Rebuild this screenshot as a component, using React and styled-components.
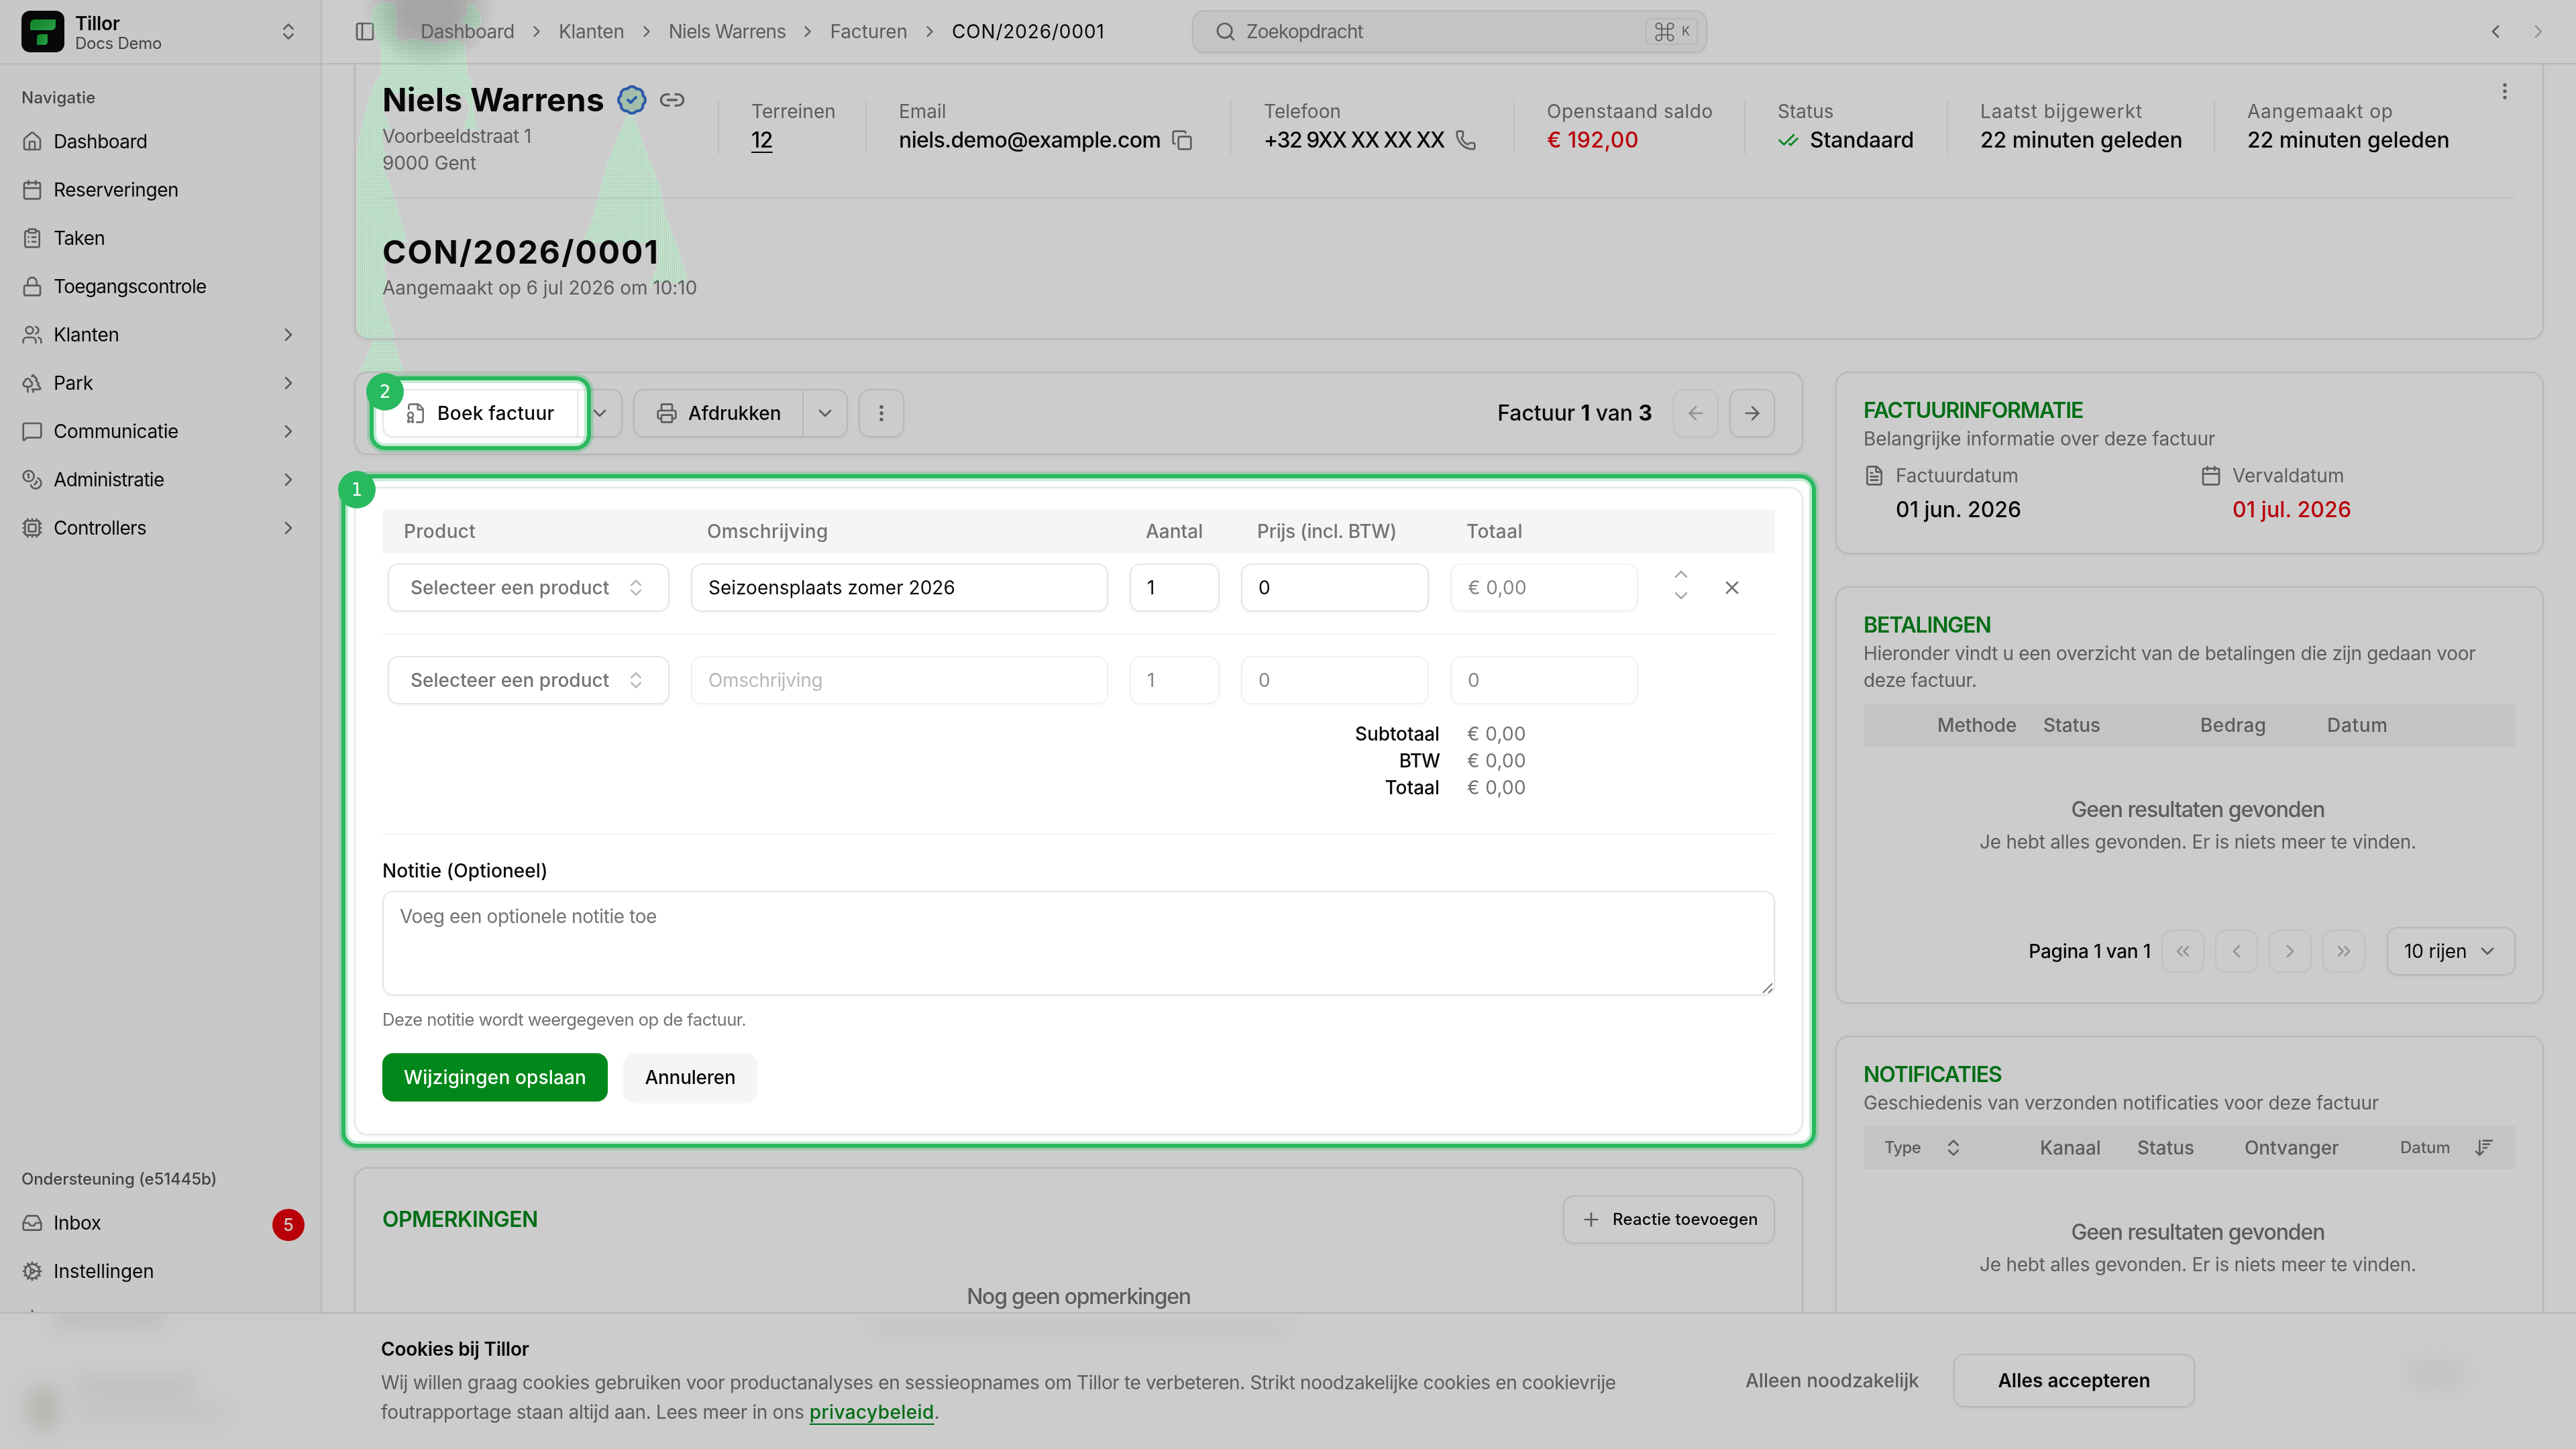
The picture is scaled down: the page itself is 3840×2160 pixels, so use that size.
import React from "react";
import styled, { createGlobalStyle, css } from "styled-components";
import {
  ArrowDownWideNarrow,
  ArrowLeft,
  ArrowRight,
  BadgeCheck,
  Calendar,
  CheckCheck,
  ChevronDown,
  ChevronLeft,
  ChevronRight,
  ChevronUp,
  ChevronsLeft,
  ChevronsRight,
  ChevronsUpDown,
  ClipboardList,
  Cog,
  Coins,
  Command,
  Copy,
  Cpu,
  EllipsisVertical,
  FileBadge,
  FileText,
  House,
  Inbox,
  Link2,
  Lock,
  MessageSquare,
  PanelLeft,
  Phone,
  Plus,
  Printer,
  Search,
  Sun,
  Trees,
  Users,
  X,
} from "lucide-react";

const color = {
  text: "#0a0a0a",
  label: "#545454",
  muted: "#737373",
  border: "#e5e5e5",
  soft: "#f5f5f5",
  sidebar: "#fafafa",
  green: "#00881a",
  red: "#e7000b",
  ring: "#29b95f",
};

const GlobalStyle = createGlobalStyle`
  * { box-sizing: border-box; }
  body {
    margin: 0;
    background: #fff;
    color: ${color.text};
    font-family: Inter, "Liberation Sans", sans-serif;
    font-size: 28px;
    line-height: 40px;
    overflow: hidden;
  }
  svg { display: block; flex: none; }
`;

/**
 * Text
 */
const Text = styled.span`
  display: block;
  white-space: nowrap;
  font-size: ${(p) => p.$size || 28}px;
  font-weight: ${(p) => p.$weight || 400};
  line-height: ${(p) => p.$line || 40}px;
  letter-spacing: ${(p) => p.$ls || 0}px;
  color: ${(p) => color[p.$tone] || color.text};
`;

/**
 * Shell
 */
const Page = styled.div`
  position: relative;
  display: flex;
  width: 3840px;
  height: 2160px;
  overflow: hidden;
`;

const Sidebar = styled.aside`
  display: flex;
  flex-direction: column;
  flex: none;
  width: 480px;
  height: 2160px;
  background: ${color.sidebar};
  border-right: 2px solid ${color.border};
`;

const Brand = styled.div`
  display: flex;
  align-items: center;
  gap: 16px;
  flex: none;
  height: 96px;
  padding: 0 32px;
  border-bottom: 2px solid ${color.border};

  > svg:last-child { margin-left: auto; color: ${color.muted}; }
`;

const BrandNames = styled.div`
  padding-top: 5px;
`;

const NavLabel = styled.div`
  padding: 0 32px;
  margin-top: ${(p) => p.$top}px;
  height: 40px;
`;

const NavList = styled.nav`
  margin-top: ${(p) => p.$top}px;
`;

const NavItem = styled.div`
  display: flex;
  align-items: center;
  gap: 16px;
  height: 72px;
  padding: 0 32px;

  > svg { color: ${color.muted}; }
  > svg:last-child:not(:first-child) { margin-left: auto; }
`;

const InboxCount = styled.span`
  display: flex;
  align-items: center;
  justify-content: center;
  width: 48px;
  height: 48px;
  margin: 6px -8px 0 auto;
  border-radius: 50%;
  background: ${color.red};
  color: #fff;
  font-size: 25px;
  font-weight: 500;
`;

const Main = styled.main`
  flex: 1;
  min-width: 0;
`;

/**
 * Top bar
 */
const TopBar = styled.header`
  position: relative;
  display: flex;
  align-items: center;
  height: 96px;
  padding: 0 40px 0 48px;
  border-bottom: 2px solid ${color.border};
  color: ${color.muted};
`;

const AvatarHaze = styled.div`
  position: absolute;
  left: 60px;
  top: -70px;
  width: 200px;
  height: 170px;
  background: radial-gradient(closest-side, #cfcfcf 0 35%, #dcdcdc 60%, rgba(255, 255, 255, 0) 100%);
`;

const TopRule = styled.div`
  width: 2px;
  height: 32px;
  margin: 0 33px 0 32px;
  background: ${color.border};
`;

const Crumbs = styled.div`
  position: relative;
  display: flex;
  align-items: center;
  gap: 19px;
  width: 1150px;
`;

const SearchBox = styled.div`
  display: flex;
  align-items: center;
  gap: 15px;
  width: 768px;
  height: 64px;
  padding: 0 12px 0 32px;
  border: 2px solid ${color.border};
  border-radius: 18px;
  background: ${color.soft};
  box-shadow: 0 2px 4px rgba(0, 0, 0, 0.05);
`;

const Kbd = styled.span`
  display: flex;
  align-items: center;
  gap: 8px;
  width: 78px;
  height: 40px;
  margin-left: auto;
  padding-left: 9px;
  border: 2px solid ${color.border};
  border-radius: 8px;
  font-size: 18px;
`;

const TopArrows = styled.div`
  display: flex;
  gap: 32px;
  margin-left: auto;

  > svg:last-child { opacity: 0.5; }
`;

/**
 * Cards
 */
const card = css`
  background: #fff;
  border: 2px solid ${color.border};
  border-radius: 20px;
  box-shadow: 0 2px 6px rgba(0, 0, 0, 0.06);
`;

const CustomerCard = styled.section`
  ${card}
  width: 3264px;
  height: 410px;
  margin-left: 48px;
  padding: 25px 40px 0;
  border-top: 0;
  border-radius: 0 0 20px 20px;
`;

const CustomerRow = styled.div`
  display: flex;
  align-items: flex-start;
  height: 175px;
  border-bottom: 2px solid #f0f0f0;
  margin-bottom: 52px;
`;

const CustomerName = styled.div`
  width: 500px;
`;

const NameLine = styled.div`
  display: flex;
  align-items: center;
  height: 56px;
  margin-bottom: 6px;
  color: ${color.muted};
`;

const NameSlot = styled.div`
  width: 348px;
`;

const Verified = styled(BadgeCheck)`
  margin-right: 16px;
  color: #3a6ad7;
  fill: #dcdcdc;
`;

const Stat = styled.div`
  flex: none;
  width: ${(p) => p.$width}px;
  height: 80px;
  margin-top: 29px;
  padding-left: 48px;
  border-left: 2px solid #efefef;
`;

const StatValue = styled.div`
  display: flex;
  align-items: center;
  gap: ${(p) => p.$gap || 16}px;
  height: 44px;
  margin-top: 5px;
  color: ${color.muted};
`;

const Underlined = styled(Text)`
  text-decoration: underline;
  text-decoration-thickness: 2px;
  text-underline-offset: 6px;
`;

const CardMenu = styled.div`
  margin-left: auto;
  margin-top: -1px;
  color: ${color.muted};
`;

const Columns = styled.div`
  display: grid;
  grid-template-columns: 2160px 1056px;
  gap: 48px;
  padding: 48px 0 0 48px;
`;

const Stack = styled.div`
  display: flex;
  flex-direction: column;
  gap: 48px;
`;

const Toolbar = styled.section`
  ${card}
  display: flex;
  align-items: center;
  gap: 16px;
  height: 124px;
  padding: 0 40px;
`;

const button = css`
  display: flex;
  align-items: center;
  height: 72px;
  background: #fff;
  border: 2px solid ${color.border};
  box-shadow: 0 2px 4px rgba(0, 0, 0, 0.05);
  color: ${color.muted};
`;

const SplitButton = styled.div`
  ${button}
  border-radius: 16px;
`;

const SplitMain = styled.div`
  display: flex;
  align-items: center;
  gap: 16px;
  width: ${(p) => p.$width}px;
  height: 68px;
  padding-left: 32px;
  border-right: 2px solid ${color.border};
`;

const SplitArrow = styled.div`
  display: flex;
  justify-content: center;
  width: 64px;
`;

const SquareButton = styled.div`
  ${button}
  justify-content: center;
  width: ${(p) => p.$width || 68}px;
  height: ${(p) => p.$height || 72}px;
  border-radius: 16px;
  opacity: ${(p) => (p.$off ? 0.5 : 1)};
`;

const Pager = styled.div`
  display: flex;
  align-items: center;
  gap: 16px;
  margin-left: auto;

  b { font-weight: 700; }
  > span { margin-right: 15px; }
`;

/**
 * Invoice form
 */
const FormCard = styled.section`
  ${card}
  height: 966px;
  padding: 32px 40px 0;
`;

const lineColumns = css`
  display: grid;
  grid-template-columns: 420px 622px 134px 280px 280px 64px 56px;
  column-gap: 32px;
  align-items: center;
  padding-left: 8px;
`;

const LineHead = styled.div`
  ${lineColumns}
  height: 64px;
  background: ${color.soft};

  > span { padding-left: 24px; }
`;

const Line = styled.div`
  ${lineColumns}
  height: ${(p) => p.$height}px;
  align-items: start;
  padding-top: ${(p) => p.$top}px;
  ${(p) => p.$rule && `border-bottom: 2px solid ${color.soft};`}
`;

const Field = styled.div`
  ${button}
  padding: 0 24px;
  border-radius: 16px;
  opacity: ${(p) => (p.$off ? 0.5 : 1)};
`;

const ProductSelect = styled(Field)`
  justify-content: space-between;
  padding: 0 32px;

  > svg { opacity: 0.5; }
`;

const MoveButtons = styled.div`
  display: flex;
  flex-direction: column;
  align-items: center;
  height: 72px;
  color: ${color.muted};
  opacity: 0.6;
`;

const RemoveButton = styled.div`
  display: flex;
  align-items: center;
  height: 72px;
  margin-left: -4px;
  color: ${color.muted};
`;

const Totals = styled.div`
  display: grid;
  grid-template-columns: 1576px auto;
  column-gap: 41px;
  align-content: start;
  height: 170px;
  margin-top: 24px;
  border-bottom: 2px solid ${color.soft};

  > :nth-child(odd) { text-align: right; }
`;

const NoteLabel = styled.div`
  margin-top: 34px;
`;

const NoteArea = styled.div`
  position: relative;
  height: 156px;
  margin: 10px 0 16px;
  padding: 16px 24px;
  border: 2px solid ${color.border};
  border-radius: 16px;
  box-shadow: 0 2px 4px rgba(0, 0, 0, 0.05);
`;

const Grip = styled.svg`
  position: absolute;
  right: 1px;
  bottom: 1px;
`;

const FormActions = styled.div`
  display: flex;
  gap: 24px;
  margin-top: 30px;
`;

const ActionButton = styled.div`
  display: flex;
  align-items: center;
  justify-content: center;
  width: ${(p) => p.$width}px;
  height: 72px;
  border-radius: 16px;
  background: ${(p) => (p.$primary ? color.green : color.soft)};
  box-shadow: 0 2px 4px rgba(0, 0, 0, 0.06);

  > span { ${(p) => p.$primary && "color: #fff;"} }
`;

const CommentCard = styled.section`
  ${card}
  height: 600px;
  padding: 40px 40px 0;
`;

const CommentHead = styled.div`
  display: flex;
  align-items: center;
  justify-content: space-between;
  height: 72px;
  margin-bottom: 55px;
`;

const AddButton = styled.div`
  ${button}
  gap: 16px;
  width: 316px;
  padding-left: 24px;
  border-radius: 16px;
`;

const Centered = styled.div`
  display: flex;
  flex-direction: column;
  align-items: center;
  gap: 4px;
  margin-top: ${(p) => p.$top || 0}px;
  padding-left: ${(p) => p.$shift || 0}px;
`;

/**
 * Right column
 */
const SideCard = styled.section`
  ${card}
  height: ${(p) => p.$height}px;
  padding: 39px 40px 0;

  > span + span { margin-top: 6px; }
  > span + span + span { margin-top: 0; }
`;

const Dates = styled.div`
  display: grid;
  grid-template-columns: 502px 1fr;
  margin-top: 15px;
`;

const DateCell = styled.div`
  display: grid;
  grid-template-columns: 32px auto;
  column-gap: 16px;
  row-gap: 7px;
  justify-content: start;
  align-items: center;
  color: ${color.muted};

  > :last-child { grid-column: 2; }
`;

const SideHead = styled.div`
  display: grid;
  grid-template-columns: ${(p) => p.$cols};
  align-items: center;
  height: 64px;
  margin-top: 15px;
  padding-left: ${(p) => p.$left}px;
  background: ${color.soft};
  color: ${color.muted};
`;

const Pagination = styled.div`
  display: flex;
  align-items: center;
  justify-content: flex-end;
  gap: 16px;
  margin-top: 107px;
`;

const RowsSelect = styled.div`
  ${button}
  justify-content: space-between;
  width: 192px;
  margin-left: 16px;
  padding: 0 24px;
  border-radius: 16px;
`;

/**
 * Cookie banner
 */
const Banner = styled.div`
  position: absolute;
  left: 0;
  right: 0;
  bottom: 0;
  height: 204px;
  overflow: hidden;
  background: linear-gradient(90deg, #fefefe 480px, #fff 480px);
  border-top: 2px solid ${color.border};
`;

const BannerInner = styled.div`
  position: relative;
  display: flex;
  width: 2704px;
  margin: 0 auto;
`;

const BannerText = styled.div`
  width: 2034px;
  padding-top: 31px;
`;

const BannerCopy = styled.div`
  margin-top: 6px;

  a {
    margin-left: 8px;
    color: ${color.green};
    font-weight: 500;
    letter-spacing: 0.4px;
    text-decoration: underline;
    text-decoration-thickness: 2px;
    text-underline-offset: 7px;
  }
`;

const AcceptButton = styled.div`
  display: flex;
  align-items: center;
  justify-content: center;
  width: 360px;
  height: 80px;
  margin: 60px 0 0 auto;
  border: 2px solid ${color.border};
  border-radius: 16px;
  background: #fff;
  box-shadow: 0 2px 4px rgba(0, 0, 0, 0.05);
`;

const DeclineButton = styled.div`
  padding-top: 80px;
`;

const Haze = styled.div`
  position: absolute;
  left: ${(p) => p.$x}px;
  top: ${(p) => p.$y}px;
  width: ${(p) => p.$w}px;
  height: ${(p) => p.$h}px;
  border-radius: ${(p) => p.$h / 2}px;
  background: ${(p) => p.$fill};
  filter: blur(14px);
`;

/**
 * Tour layer over the whole page
 */
const Layer = styled.svg`
  position: absolute;
  inset: 0;
  pointer-events: none;
  ${(p) => p.$multiply && "mix-blend-mode: multiply;"}
`;

const Step = styled.div`
  position: absolute;
  left: ${(p) => p.$x}px;
  top: ${(p) => p.$y}px;
  display: flex;
  align-items: center;
  justify-content: center;
  width: 56px;
  height: 56px;
  border-radius: 50%;
  background: ${color.ring};
  color: #fff;
  font-family: "DejaVu Sans", sans-serif;
  font-size: 26px;
`;

const Logo = () => (
  <svg width="64" height="62" viewBox="0 0 64 62">
    <defs>
      <linearGradient id="leaf" x1="0" y1="0" x2="1" y2="0.6">
        <stop offset="0" stopColor="#12a02c" />
        <stop offset="1" stopColor="#2fc457" />
      </linearGradient>
    </defs>
    <rect width="64" height="62" rx="13" fill="#0a0a0a" />
    <path d="M20 13H51V22Q51 29 44 29H13V20Q13 13 20 13Z" fill="url(#leaf)" />
    <path d="M28 35H39V46Q39 51 34 51H23V40Q23 35 28 35Z" fill="url(#leaf)" />
  </svg>
);

const nav = [
  [House, "Dashboard", -0.53],
  [Calendar, "Reserveringen", -0.44],
  [ClipboardList, "Taken", -0.6],
  [Lock, "Toegangscontrole", -0.7],
  [Users, "Klanten", -0.26, true],
  [Trees, "Park", -0.3, true],
  [MessageSquare, "Communicatie", -0.37, true],
  [Coins, "Administratie", -0.69, true],
  [Cpu, "Controllers", -0.62, true],
];

const SideNav = () => (
  <Sidebar>
    <Brand>
      <Logo />
      <BrandNames>
        <Text $weight={600} $ls={-0.36} $line={30}>Tillor</Text>
        <Text $size={24} $ls={-0.27} $line={30} $tone="label">Docs Demo</Text>
      </BrandNames>
      <ChevronsUpDown size={32} />
    </Brand>
    <NavLabel $top={30}>
      <Text $size={24} $weight={500} $ls={0.3} $tone="label">Navigatie</Text>
    </NavLabel>
    <NavList $top={9}>
      {nav.map(([Icon, label, ls, more]) => (
        <NavItem key={label}>
          <Icon size={32} />
          <Text $ls={ls}>{label}</Text>
          {more && <ChevronRight size={32} />}
        </NavItem>
      ))}
    </NavList>
    <NavLabel $top={915}>
      <Text $size={24} $weight={500} $ls={-0.12} $tone="label">Ondersteuning (e51445b)</Text>
    </NavLabel>
    <NavList $top={9}>
      <NavItem>
        <Inbox size={32} />
        <Text $ls={-0.4}>Inbox</Text>
        <InboxCount>5</InboxCount>
      </NavItem>
      <NavItem>
        <Cog size={32} />
        <Text $ls={-0.1}>Instellingen</Text>
      </NavItem>
      <NavItem>
        <Sun size={32} />
      </NavItem>
    </NavList>
  </Sidebar>
);

const Header = () => (
  <TopBar>
    <AvatarHaze />
    <PanelLeft size={32} />
    <TopRule />
    <Crumbs>
      <Text $tone="muted" $ls={-0.5}>Dashboard</Text>
      <ChevronRight size={28} />
      <Text $tone="muted" $ls={-0.26}>Klanten</Text>
      <ChevronRight size={28} />
      <Text $tone="muted" $ls={-0.73}>Niels Warrens</Text>
      <ChevronRight size={28} />
      <Text $tone="muted" $ls={-0.1}>Facturen</Text>
      <ChevronRight size={28} />
      <Text $ls={0.85}>CON/2026/0001</Text>
    </Crumbs>
    <SearchBox>
      <Search size={32} />
      <Text $tone="muted" $ls={-0.89}>Zoekopdracht</Text>
      <Kbd>
        <Command size={35} strokeWidth={1.3} />K
      </Kbd>
    </SearchBox>
    <TopArrows>
      <ChevronLeft size={32} />
      <ChevronRight size={32} />
    </TopArrows>
  </TopBar>
);

const Customer = () => (
  <CustomerCard>
    <CustomerRow>
      <CustomerName>
        <NameLine>
          <NameSlot>
            <Text $size={48} $weight={700} $ls={0.24} $line={56}>Niels Warrens</Text>
          </NameSlot>
          <Verified size={48} />
          <Link2 size={40} />
        </NameLine>
        <Text $tone="muted" $ls={-0.51}>Voorbeeldstraat 1</Text>
        <Text $tone="muted" $ls={-0.12}>9000 Gent</Text>
      </CustomerName>
      <Stat $width={220}>
        <Text $tone="muted" $line={32}>Terreinen</Text>
        <StatValue><Underlined $size={32} $weight={500} $ls={-0.6}>12</Underlined></StatValue>
      </Stat>
      <Stat $width={544}>
        <Text $tone="muted" $line={32}>Email</Text>
        <StatValue>
          <Text $size={32} $weight={500} $ls={-0.62}>niels.demo@example.com</Text>
          <Copy size={32} />
        </StatValue>
      </Stat>
      <Stat $width={422}>
        <Text $tone="muted" $line={32}>Telefoon</Text>
        <StatValue>
          <Text $size={32} $weight={500} $ls={-1.53}>+32 9XX XX XX XX</Text>
          <Phone size={32} />
        </StatValue>
      </Stat>
      <Stat $width={344}>
        <Text $tone="muted" $ls={0.5} $line={32}>Openstaand saldo</Text>
        <StatValue><Text $size={32} $weight={500} $ls={0.47} $tone="red">€ 192,00</Text></StatValue>
      </Stat>
      <Stat $width={302}>
        <Text $tone="muted" $line={32}>Status</Text>
        <StatValue>
          <CheckCheck size={32} color="#00a524" />
          <Text $size={32} $weight={500} $ls={-0.19}>Standaard</Text>
        </StatValue>
      </Stat>
      <Stat $width={398}>
        <Text $tone="muted" $ls={0.95} $line={32}>Laatst bijgewerkt</Text>
        <StatValue><Text $size={32} $weight={500} $ls={-0.1}>22 minuten geleden</Text></StatValue>
      </Stat>
      <Stat $width={360}>
        <Text $tone="muted" $ls={0.8} $line={32}>Aangemaakt op</Text>
        <StatValue><Text $size={32} $weight={500} $ls={-0.1}>22 minuten geleden</Text></StatValue>
      </Stat>
      <CardMenu><EllipsisVertical size={32} /></CardMenu>
    </CustomerRow>
    <Text $size={48} $weight={700} $ls={1.9} $line={56}>CON/2026/0001</Text>
    <Text $tone="muted" $ls={-0.05} $line={51}>Aangemaakt op 6 jul 2026 om 10:10</Text>
  </CustomerCard>
);

const InvoiceToolbar = () => (
  <Toolbar>
    <SplitButton>
      <SplitMain $width={290}>
        <FileBadge size={32} />
        <Text $weight={500} $ls={0.3}>Boek factuur</Text>
      </SplitMain>
      <SplitArrow><ChevronDown size={32} /></SplitArrow>
    </SplitButton>
    <SplitButton>
      <SplitMain $width={252}>
        <Printer size={32} />
        <Text $weight={500}>Afdrukken</Text>
      </SplitMain>
      <SplitArrow><ChevronDown size={32} /></SplitArrow>
    </SplitButton>
    <SquareButton><EllipsisVertical size={32} /></SquareButton>
    <Pager>
      <Text $size={32} $weight={500} $ls={-0.1}>Factuur <b>1</b> van <b>3</b></Text>
      <SquareButton $off><ArrowLeft size={32} /></SquareButton>
      <SquareButton><ArrowRight size={32} /></SquareButton>
    </Pager>
  </Toolbar>
);

const InvoiceForm = () => (
  <FormCard>
    <LineHead>
      <Text $weight={500} $tone="muted" $ls={0.3}>Product</Text>
      <Text $weight={500} $tone="muted" $ls={0.3}>Omschrijving</Text>
      <Text $weight={500} $tone="muted">Aantal</Text>
      <Text $weight={500} $tone="muted" $ls={-0.25}>Prijs (incl. BTW)</Text>
      <Text $weight={500} $tone="muted" $ls={0.4}>Totaal</Text>
    </LineHead>
    <Line $height={122} $top={16} $rule>
      <ProductSelect>
        <Text $weight={500} $tone="muted">Selecteer een product</Text>
        <ChevronsUpDown size={32} />
      </ProductSelect>
      <Field><Text>Seizoensplaats zomer 2026</Text></Field>
      <Field><Text>1</Text></Field>
      <Field><Text>0</Text></Field>
      <Field $off><Text $ls={0.3}>€ 0,00</Text></Field>
      <MoveButtons>
        <ChevronUp size={32} />
        <ChevronDown size={32} />
      </MoveButtons>
      <RemoveButton><X size={32} /></RemoveButton>
    </Line>
    <Line $height={104} $top={32}>
      <ProductSelect>
        <Text $weight={500} $tone="muted">Selecteer een product</Text>
        <ChevronsUpDown size={32} />
      </ProductSelect>
      <Field $off><Text $tone="muted" $ls={-0.31}>Omschrijving</Text></Field>
      <Field $off><Text>1</Text></Field>
      <Field $off><Text>0</Text></Field>
      <Field $off><Text>0</Text></Field>
    </Line>
    <Totals>
      <Text $weight={500} $ls={-0.11}>Subtotaal</Text>
      <Text $tone="muted" $ls={0.3}>€ 0,00</Text>
      <Text $weight={500} $ls={-1}>BTW</Text>
      <Text $tone="muted" $ls={0.3}>€ 0,00</Text>
      <Text $weight={500}>Totaal</Text>
      <Text $tone="muted" $ls={0.3}>€ 0,00</Text>
    </Totals>
    <NoteLabel>
      <Text $weight={500} $ls={0.08}>Notitie (Optioneel)</Text>
    </NoteLabel>
    <NoteArea>
      <Text $tone="muted" $ls={-0.4}>Voeg een optionele notitie toe</Text>
      <Grip width="16" height="16" viewBox="0 0 16 16" stroke="#555" strokeWidth="1.6">
        <path d="M1 15 15 1M9 15l6-6" />
      </Grip>
    </NoteArea>
    <Text $size={25.6} $tone="muted" $ls={-0.55}>Deze notitie wordt weergegeven op de factuur.</Text>
    <FormActions>
      <ActionButton $width={336} $primary><Text $weight={500} $ls={0.14}>Wijzigingen opslaan</Text></ActionButton>
      <ActionButton $width={198}><Text $weight={500} $ls={-0.27}>Annuleren</Text></ActionButton>
    </FormActions>
  </FormCard>
);

const Comments = () => (
  <CommentCard>
    <CommentHead>
      <Text $size={32} $weight={600} $tone="green" $ls={-0.6}>OPMERKINGEN</Text>
      <AddButton>
        <Plus size={32} />
        <Text $size={24} $weight={500} $ls={0.22}>Reactie toevoegen</Text>
      </AddButton>
    </CommentHead>
    <Centered>
      <Text $size={32} $weight={500} $tone="muted" $ls={-1.29} $line={48}>Nog geen opmerkingen</Text>
    </Centered>
  </CommentCard>
);

const NoResults = ({ top }) => (
  <Centered $top={top} $shift={25}>
    <Text $size={32} $weight={500} $tone="muted" $ls={-1.06} $line={48}>Geen resultaten gevonden</Text>
    <Text $tone="muted" $ls={-0.27}>Je hebt alles gevonden. Er is niets meer te vinden.</Text>
  </Centered>
);

const SideColumn = () => (
  <Stack>
    <SideCard $height={272}>
      <Text $size={32} $weight={600} $tone="green" $ls={-1.19} $line={33}>FACTUURINFORMATIE</Text>
      <Text $tone="muted" $ls={-0.1}>Belangrijke informatie over deze factuur</Text>
      <Dates>
        <DateCell>
          <FileText size={32} />
          <Text $tone="muted">Factuurdatum</Text>
          <Text $size={32} $weight={500} $line={48}>01 jun. 2026</Text>
        </DateCell>
        <DateCell>
          <Calendar size={32} />
          <Text $tone="muted">Vervaldatum</Text>
          <Text $size={32} $weight={500} $line={48} $ls={0.1} $tone="red">01 jul. 2026</Text>
        </DateCell>
      </Dates>
    </SideCard>
    <SideCard $height={622}>
      <Text $size={32} $weight={600} $tone="green" $ls={-1.14} $line={33}>BETALINGEN</Text>
      <Text $tone="muted" $ls={-0.33}>Hieronder vindt u een overzicht van de betalingen die zijn gedaan voor</Text>
      <Text $tone="muted" $ls={-0.33}>deze factuur.</Text>
      <SideHead $left={110} $cols="158px 234px 189px auto">
        <Text $weight={500} $tone="muted" $ls={-0.1}>Methode</Text>
        <Text $weight={500} $tone="muted">Status</Text>
        <Text $weight={500} $tone="muted" $ls={0.4}>Bedrag</Text>
        <Text $weight={500} $tone="muted" $ls={0.7}>Datum</Text>
      </SideHead>
      <NoResults top={70} />
      <Pagination>
        <Text $weight={500} $ls={-0.25}>Pagina 1 van 1</Text>
        <SquareButton $off $width={64} $height={64}><ChevronsLeft size={32} /></SquareButton>
        <SquareButton $off $width={64} $height={64}><ChevronLeft size={32} /></SquareButton>
        <SquareButton $off $width={64} $height={64}><ChevronRight size={32} /></SquareButton>
        <SquareButton $off $width={64} $height={64}><ChevronsRight size={32} /></SquareButton>
        <RowsSelect>
          <Text $ls={-0.11}>10 rijen</Text>
          <ChevronDown size={32} />
        </RowsSelect>
      </Pagination>
    </SideCard>
    <SideCard $height={700}>
      <Text $size={32} $weight={600} $tone="green" $ls={-1.11} $line={33}>NOTIFICATIES</Text>
      <Text $tone="muted" $ls={-0.18}>Geschiedenis van verzonden notificaties voor deze factuur</Text>
      <SideHead $left={31} $cols="87px 145px 145px 160px 232px 109px auto">
        <Text $size={24} $weight={500} $tone="muted" $ls={-0.7}>Type</Text>
        <ChevronsUpDown size={32} />
        <Text $weight={500} $tone="muted">Kanaal</Text>
        <Text $weight={500} $tone="muted">Status</Text>
        <Text $weight={500} $tone="muted" $ls={-0.1}>Ontvanger</Text>
        <Text $size={24} $weight={500} $tone="muted">Datum</Text>
        <ArrowDownWideNarrow size={32} />
      </SideHead>
      <NoResults top={70} />
    </SideCard>
  </Stack>
);

const CookieBanner = () => (
  <Banner>
    <Haze $x={80} $y={-8} $w={165} $h={26} $fill="#e9e9e9" />
    <Haze $x={42} $y={106} $w={46} $h={68} $fill="#e2e2dc" />
    <Haze $x={112} $y={94} $w={180} $h={34} $fill="#efefef" />
    <Haze $x={112} $y={136} $w={225} $h={24} $fill="#f4f4f4" />
    <Haze $x={1295} $y={12} $w={625} $h={22} $fill="#f5f5f5" />
    <Haze $x={3585} $y={66} $w={96} $h={46} $fill="#f5f5f5" />
    <BannerInner>
      <BannerText>
        <Text $weight={600} $ls={-0.23} $line={44}>Cookies bij Tillor</Text>
        <BannerCopy>
          <Text $tone="muted" $ls={-0.38} $line={44}>
            Wij willen graag cookies gebruiken voor productanalyses en sessieopnames om Tillor te verbeteren. Strikt noodzakelijke cookies en cookievrije
          </Text>
          <Text $tone="muted" $ls={-0.34} $line={44}>
            foutrapportage staan altijd aan. Lees meer in ons<a>privacybeleid</a>.
          </Text>
        </BannerCopy>
      </BannerText>
      <DeclineButton>
        <Text $weight={500} $tone="muted">Alleen noodzakelijk</Text>
      </DeclineButton>
      <AcceptButton>
        <Text $weight={600}>Alles accepteren</Text>
      </AcceptButton>
    </BannerInner>
  </Banner>
);

// light green areas that shine through the dimmed part
const glow = [
  "M554 23 557 10 569 3 590 6 591 31 589 50 596 63 615 58 653 65 680 59 693 65 695 92 697 111 703 122 707 145 704 163 713 194 691 193 700 160 692 143 595 140 572 141 573 168 582 192 571 195 571 218 577 230 571 249 584 283 607 360 573 363 578 387 572 400 577 417 570 448 579 473 589 504 542 504 532 494 532 245 534 214 540 184 550 149 557 126 568 110 569 92 567 68 557 45 551 36Z",
  "M697 5 707 8 716 19 717 34 709 44 691 36 686 32 695 23Z",
  "M557 507H586L602 554H536Z",
  "M936 172H944L959 214 984 279 992 321 1011 371 1025 417 1018 421H975L969 434 970 421 981 394 980 362H869L883 325 906 241 925 195Z",
  "M942 130a20 20 0 1 0 .1 0Z",
];

const spots = [
  { x: 554, y: 564, w: 324, h: 104 },
  { x: 512, y: 710, w: 2192, h: 998 },
];

const Tour = () => (
  <>
    <Layer $multiply width="3840" height="2160">
      <defs>
        <pattern id="grain" width="3" height="3" patternUnits="userSpaceOnUse">
          <rect width="3" height="3" fill="#bfe3cb" />
          <rect width="1" height="1" fill="#a9a9a9" />
        </pattern>
        <mask id="holes">
          <rect width="3840" height="2160" fill="#fff" />
          {spots.map((s) => (
            <rect key={s.y} x={s.x} y={s.y} width={s.w} height={s.h} rx="20" fill="#000" />
          ))}
          {glow.map((d) => <path key={d} d={d} fill="#000" />)}
        </mask>
      </defs>
      <rect width="3840" height="2160" fill="#ccc" mask="url(#holes)" />
      {glow.map((d) => <path key={d} d={d} fill="url(#grain)" />)}
    </Layer>
    <Layer width="3840" height="2160" fill="none" stroke={color.ring}>
      {spots.map((s) => (
        <g key={s.y}>
          <rect x={s.x} y={s.y} width={s.w} height={s.h} rx="20" strokeWidth="14" strokeOpacity="0.28" />
          <rect x={s.x} y={s.y} width={s.w} height={s.h} rx="20" strokeWidth="6" />
        </g>
      ))}
    </Layer>
    <Step $x={546} $y={556}>2</Step>
    <Step $x={504} $y={702}>1</Step>
  </>
);

const App = () => (
  <Page>
    <GlobalStyle />
    <SideNav />
    <Main>
      <Header />
      <Customer />
      <Columns>
        <Stack>
          <InvoiceToolbar />
          <InvoiceForm />
          <Comments />
        </Stack>
        <SideColumn />
      </Columns>
    </Main>
    <CookieBanner />
    <Tour />
  </Page>
);

export default App;
